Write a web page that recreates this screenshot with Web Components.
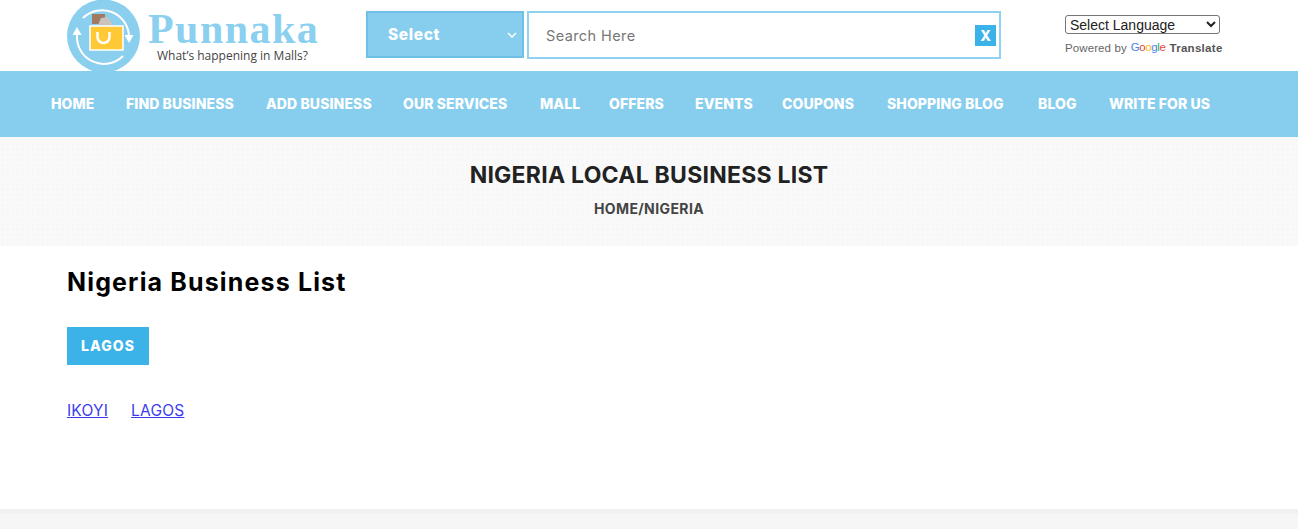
<!DOCTYPE html>
<html>
<head>
<meta charset="utf-8">
<title>Nigeria Local Business List</title>
<style>
  html, body { margin: 0; padding: 0; background: #fff; }
  body { font-family: Inter, "Open Sans", sans-serif; overflow: hidden; height: 529px; }
</style>
</head>
<body>
<site-header></site-header>
<site-nav>
  <nav-item w="75">HOME</nav-item>
  <nav-item w="140">FIND BUSINESS</nav-item>
  <nav-item w="137">ADD BUSINESS</nav-item>
  <nav-item w="137">OUR SERVICES</nav-item>
  <nav-item w="69">MALL</nav-item>
  <nav-item w="86">OFFERS</nav-item>
  <nav-item w="87">EVENTS</nav-item>
  <nav-item w="105">COUPONS</nav-item>
  <nav-item w="151">SHOPPING BLOG</nav-item>
  <nav-item w="71">BLOG</nav-item>
  <nav-item w="101">WRITE FOR US</nav-item>
</site-nav>
<page-banner heading="NIGERIA LOCAL BUSINESS LIST" crumb="HOME/NIGERIA"></page-banner>
<business-list heading="Nigeria Business List" region="LAGOS">
  <a href="#">IKOYI</a>
  <a href="#">LAGOS</a>
</business-list>
<site-footer></site-footer>

<script>
class SiteHeader extends HTMLElement {
  constructor() {
    super();
    this.attachShadow({ mode: 'open' });
  }

  connectedCallback() {
    this.shadowRoot.innerHTML = `
      <style>
        :host { display: flex; align-items: flex-start; height: 71px; padding-left: 67px; box-sizing: border-box; overflow: hidden; }
        .logo { flex: none; width: 299px; height: 71px; display: flex; }
        .brand { margin-left: 7px; display: flex; flex-direction: column; }
        .name { font: 700 42px/38px "Liberation Serif", serif; color: #8bd0ef; letter-spacing: 1.45px; margin-top: 10px; }
        .tag { font: 12px/14px "Open Sans", sans-serif; color: #444; margin: 1px 0 0 9px; white-space: nowrap; }
        .picker { flex: none; box-sizing: border-box; width: 158px; height: 47px; margin-top: 11px; background: #87ceee; border: 2px solid #6fc0e6;
          display: flex; align-items: center; justify-content: space-between; padding: 0 5px 0 20px; color: #fff; font: 800 15.5px Inter, sans-serif; letter-spacing: .6px; }
        .search { flex: none; box-sizing: border-box; width: 474px; height: 48px; margin: 11px 0 0 3px; border: 2px solid #8fd2f0; background: #fff;
          display: flex; align-items: center; justify-content: space-between; padding: 0 3px 0 17px; font: 14.5px Inter, sans-serif; color: #777; letter-spacing: .4px; }
        .clear { width: 21px; height: 21px; background: #3bb3e8; color: #fff; font: 800 14px/21px Inter, sans-serif; text-align: center; letter-spacing: 0; }
        .lang { flex: none; margin: 15px 0 0 64px; width: 160px; }
        select { display: block; width: 155px; height: 19px; font: 14px "Liberation Sans", sans-serif; color: #222; background: #fff; border: 1px solid #767676; border-radius: 3px; padding: 0; }
        .powered { margin-top: 7px; font: 11.5px/14px "Liberation Sans", sans-serif; color: #666; white-space: nowrap; letter-spacing: .1px; display: flex; gap: 4px; }
        .google { font-size: 11.5px; letter-spacing: -.4px; position: relative; top: -1px; }
        .translate { color: #555; font-weight: 700; letter-spacing: .3px; }
      </style>
      <div class="logo">
        <svg width="74" height="74" viewBox="0 0 74 74" style="flex:none;margin-top:-1px">
          <circle cx="36.500" cy="37" r="36.500" fill="#8bcfee"/>
          <path d="M16 19A27 27 0 0 1 62 38" fill="none" stroke="#fff" stroke-width="2"/>
          <path d="M10 36A27 27 0 0 0 56 57" fill="none" stroke="#fff" stroke-width="2"/>
          <path d="M57.500 36h9l-4.500 8z" fill="#fff"/>
          <path d="M5.500 36h9l-4.500-8z" fill="#fff"/>
          <rect x="25" y="15" width="13" height="10" fill="#a07a62"/>
          <path d="M31 26l3-7 7-1 5 8z" fill="#c9c3bb"/>
          <path d="M23 27h33v24H23z" fill="#ffc935" stroke="#fff" stroke-width="1.500"/>
          <path d="M30.500 33v5a6 6 0 0 0 12 0v-5" fill="none" stroke="#fff" stroke-width="2.500"/>
        </svg>
        <div class="brand">
          <div class="name">Punnaka</div>
          <div class="tag">What’s happening in Malls?</div>
        </div>
      </div>
      <div class="picker">
        <span>Select</span>
        <svg width="10" height="6" viewBox="0 0 10 6"><path d="M1 1l4 4 4-4" fill="none" stroke="#fff" stroke-width="1.500"/></svg>
      </div>
      <div class="search">
        <span>Search Here</span>
        <span class="clear">X</span>
      </div>
      <div class="lang">
        <select><option>Select Language</option></select>
        <div class="powered">
          <span>Powered by</span>
          <span class="google"><span style="color:#4285f4">G</span><span style="color:#ea4335">o</span><span style="color:#fbbc05">o</span><span style="color:#4285f4">g</span><span style="color:#34a853">l</span><span style="color:#ea4335">e</span></span>
          <span class="translate">Translate</span>
        </div>
      </div>
    `;
  }
}

class SiteNav extends HTMLElement {
  constructor() {
    super();
    this.attachShadow({ mode: 'open' });
  }

  connectedCallback() {
    this.shadowRoot.innerHTML = `
      <style>
        :host { display: flex; align-items: center; height: 66px; padding-left: 51px; background: #87ceee; box-sizing: border-box; }
      </style>
      <slot></slot>
    `;
  }
}

class NavItem extends HTMLElement {
  constructor() {
    super();
    this.attachShadow({ mode: 'open' });
  }

  connectedCallback() {
    this.shadowRoot.innerHTML = `
      <style>
        :host { display: block; flex: none; width: ${this.getAttribute('w')}px; white-space: nowrap; color: #fff; font: 800 14px/20px Inter, sans-serif; letter-spacing: .1px; }
      </style>
      <slot></slot>
    `;
  }
}

class PageBanner extends HTMLElement {
  constructor() {
    super();
    this.attachShadow({ mode: 'open' });
  }

  connectedCallback() {
    this.shadowRoot.innerHTML = `
      <style>
        :host { display: flex; flex-direction: column; align-items: center; height: 109px; box-sizing: border-box; padding-top: 24px; background-color: #f9f9f9;
          background-image: radial-gradient(#f5f5f5 1px, transparent 1px); background-size: 5px 5px; }
        h1 { margin: 0; font: 700 23px/29px Inter, sans-serif; color: #222; letter-spacing: .25px; }
        div { margin-top: 10px; font: 700 14px/18px Inter, sans-serif; color: #444; letter-spacing: .4px; }
      </style>
      <h1>${this.getAttribute('heading')}</h1>
      <div>${this.getAttribute('crumb')}</div>
    `;
  }
}

class BusinessList extends HTMLElement {
  constructor() {
    super();
    this.attachShadow({ mode: 'open' });
  }

  connectedCallback() {
    this.shadowRoot.innerHTML = `
      <style>
        :host { display: block; height: 263px; box-sizing: border-box; padding: 20px 0 0 67px; }
        h2 { margin: 0; font: 700 25px/32px Inter, sans-serif; color: #000; letter-spacing: 1.15px; }
        .region { box-sizing: border-box; width: 82px; height: 38px; margin-top: 29px; background: #3bb3e8; color: #fff; font: 800 14px/38px Inter, sans-serif; text-align: center; letter-spacing: 1.1px; }
        .links { display: flex; gap: 23px; margin-top: 36px; font: 15.5px/20px Inter, sans-serif; }
        ::slotted(a) { color: #3b3bee; letter-spacing: .2px; }
      </style>
      <h2>${this.getAttribute('heading')}</h2>
      <div class="region">${this.getAttribute('region')}</div>
      <div class="links"><slot></slot></div>
    `;
  }
}

class SiteFooter extends HTMLElement {
  constructor() {
    super();
    this.attachShadow({ mode: 'open' });
  }

  connectedCallback() {
    this.shadowRoot.innerHTML = `
      <style>
        :host { display: block; height: 20px; background: #f6f6f6; border-top: 5px solid #f1f1f1; box-sizing: border-box; }
      </style>
    `;
  }
}

customElements.define('site-header', SiteHeader);
customElements.define('site-nav', SiteNav);
customElements.define('nav-item', NavItem);
customElements.define('page-banner', PageBanner);
customElements.define('business-list', BusinessList);
customElements.define('site-footer', SiteFooter);
</script>
</body>
</html>
